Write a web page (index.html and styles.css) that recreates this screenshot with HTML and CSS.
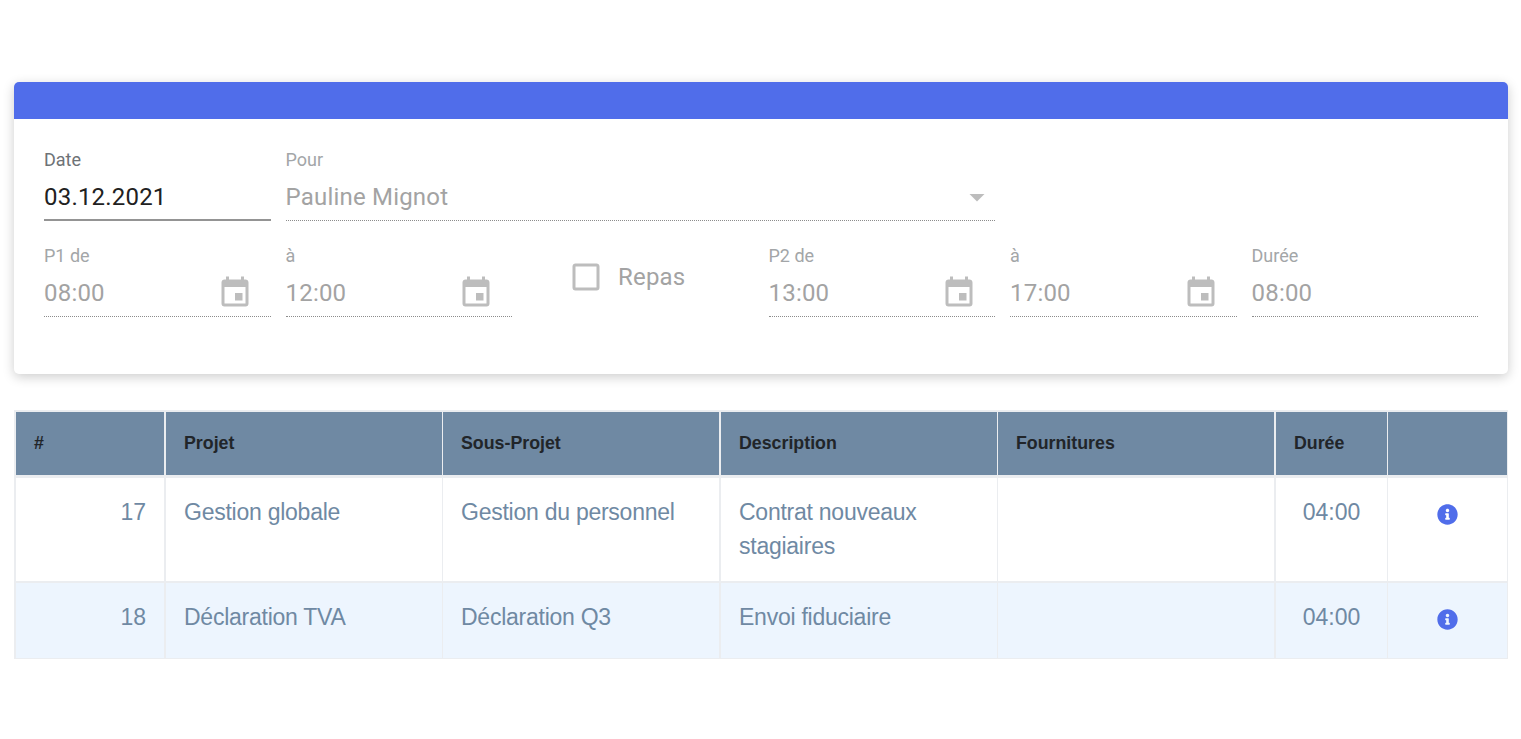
FILE: index.html
```html
<!DOCTYPE html>
<html lang="fr">
<head>
<meta charset="utf-8">
<title>Saisie</title>
<link rel="stylesheet" href="styles.css">
</head>
<body>
<main class="page">
  <section class="card">
    <div class="card-head"></div>
    <div class="form">
      <div class="field">
        <label class="field-label active">Date</label>
        <div class="field-control solid"><span class="value active">03.12.2021</span></div>
      </div>
      <div class="field span3">
        <label class="field-label">Pour</label>
        <div class="field-control"><span class="value">Pauline Mignot</span>
          <svg class="icon" viewBox="0 0 24 24"><path d="M7,10L12,15L17,10H7Z"/></svg>
        </div>
      </div>
      <div class="spacer"></div>
      <div class="spacer"></div>

      <div class="field">
        <label class="field-label">P1 de</label>
        <div class="field-control"><span class="value">08:00</span>
          <svg class="icon cal" viewBox="0 0 24 24"><path d="M19,19H5V8H19M16,1V3H8V1H6V3H5C3.89,3 3,3.89 3,5V19A2,2 0 0,0 5,21H19A2,2 0 0,0 21,19V5C21,3.89 20.1,3 19,3H18V1M17,12H12V17H17V12Z"/></svg>
        </div>
      </div>
      <div class="field">
        <label class="field-label">à</label>
        <div class="field-control"><span class="value">12:00</span>
          <svg class="icon cal" viewBox="0 0 24 24"><path d="M19,19H5V8H19M16,1V3H8V1H6V3H5C3.89,3 3,3.89 3,5V19A2,2 0 0,0 5,21H19A2,2 0 0,0 21,19V5C21,3.89 20.1,3 19,3H18V1M17,12H12V17H17V12Z"/></svg>
        </div>
      </div>
      <div class="check">
        <svg class="check-box" viewBox="0 0 24 24"><path d="M19,3H5C3.89,3 3,3.89 3,5V19A2,2 0 0,0 5,21H19A2,2 0 0,0 21,19V5C21,3.89 20.1,3 19,3M19,5V19H5V5H19Z"/></svg>
        <span class="check-label">Repas</span>
      </div>
      <div class="field">
        <label class="field-label">P2 de</label>
        <div class="field-control"><span class="value">13:00</span>
          <svg class="icon cal" viewBox="0 0 24 24"><path d="M19,19H5V8H19M16,1V3H8V1H6V3H5C3.89,3 3,3.89 3,5V19A2,2 0 0,0 5,21H19A2,2 0 0,0 21,19V5C21,3.89 20.1,3 19,3H18V1M17,12H12V17H17V12Z"/></svg>
        </div>
      </div>
      <div class="field">
        <label class="field-label">à</label>
        <div class="field-control"><span class="value">17:00</span>
          <svg class="icon cal" viewBox="0 0 24 24"><path d="M19,19H5V8H19M16,1V3H8V1H6V3H5C3.89,3 3,3.89 3,5V19A2,2 0 0,0 5,21H19A2,2 0 0,0 21,19V5C21,3.89 20.1,3 19,3H18V1M17,12H12V17H17V12Z"/></svg>
        </div>
      </div>
      <div class="field">
        <label class="field-label">Durée</label>
        <div class="field-control"><span class="value">08:00</span></div>
      </div>
    </div>
  </section>

  <table class="grid">
    <colgroup>
      <col class="c-num"><col class="c-proj"><col class="c-sub"><col class="c-desc"><col class="c-four"><col class="c-dur"><col class="c-act">
    </colgroup>
    <thead>
      <tr>
        <th class="thick">#</th><th>Projet</th><th class="thick">Sous-Projet</th><th>Description</th><th class="thick">Fournitures</th><th>Durée</th><th></th>
      </tr>
    </thead>
    <tbody>
      <tr class="row-a">
        <td class="thick num">17</td><td class="txt">Gestion globale</td><td class="thick txt">Gestion du personnel</td><td class="txt">Contrat nouveaux stagiaires</td><td class="thick"></td><td class="dur">04:00</td>
        <td class="act"><svg class="info" viewBox="0 0 512 512"><path d="M256 8C119.043 8 8 119.083 8 256c0 136.997 111.043 248 248 248s248-111.003 248-248C504 119.083 392.957 8 256 8zm0 110c23.196 0 42 18.804 42 42s-18.804 42-42 42-42-18.804-42-42 18.804-42 42-42zm56 254c0 6.627-5.373 12-12 12h-88c-6.627 0-12-5.373-12-12v-24c0-6.627 5.373-12 12-12h12v-64h-12c-6.627 0-12-5.373-12-12v-24c0-6.627 5.373-12 12-12h64c6.627 0 12 5.373 12 12v100h12c6.627 0 12 5.373 12 12v24z"/></svg></td>
      </tr>
      <tr class="row-b">
        <td class="thick num">18</td><td class="txt">Déclaration TVA</td><td class="thick txt">Déclaration Q3</td><td class="txt">Envoi fiduciaire</td><td class="thick"></td><td class="dur">04:00</td>
        <td class="act"><svg class="info" viewBox="0 0 512 512"><path d="M256 8C119.043 8 8 119.083 8 256c0 136.997 111.043 248 248 248s248-111.003 248-248C504 119.083 392.957 8 256 8zm0 110c23.196 0 42 18.804 42 42s-18.804 42-42 42-42-18.804-42-42 18.804-42 42-42zm56 254c0 6.627-5.373 12-12 12h-88c-6.627 0-12-5.373-12-12v-24c0-6.627 5.373-12 12-12h12v-64h-12c-6.627 0-12-5.373-12-12v-24c0-6.627 5.373-12 12-12h64c6.627 0 12 5.373 12 12v100h12c6.627 0 12 5.373 12 12v24z"/></svg></td>
      </tr>
    </tbody>
  </table>
</main>
</body>
</html>
```

FILE: styles.css
```css
* { box-sizing: border-box; }

html, body { margin: 0; padding: 0; background: #fff; }

.page {
  padding: 82px 13px 0 14px;
  font-family: "Liberation Sans", Arial, sans-serif;
}

.card {
  height: 292px;
  background: #fff;
  border-radius: 5px;
  box-shadow: 0 3px 12px rgba(0, 0, 0, .2);
  overflow: hidden;
}

.card-head { height: 37px; background: #506dea; }

.form {
  display: grid;
  grid-template-columns: repeat(6, 226.5px);
  column-gap: 15px;
  row-gap: 23px;
  padding: 29px 30px 0;
  font-family: Roboto, sans-serif;
}

.span3 { grid-column: span 3; }

.field { height: 73px; display: flex; flex-direction: column; }

.field-label {
  height: 24px;
  font-size: 18px;
  line-height: 24px;
  color: #a3a6a8;
}
.field-label.active { color: #6e7276; }

.field-control {
  flex: 1;
  display: flex;
  align-items: center;
  justify-content: space-between;
  padding-top: 2px;
  border-bottom: 1px dotted #8c8c8c;
}
.field-control.solid { border-bottom: 2px solid #949494; }

.value {
  font-size: 24px;
  line-height: 36px;
  letter-spacing: .2px;
  color: #a3a3a3;
}
.value.active { color: #212121; }

.icon { width: 36px; height: 36px; fill: #bdbdbd; display: block; }
.cal { margin-right: 18px; }

.check {
  display: flex;
  align-items: center;
  height: 73px;
  padding-left: 41px;
  padding-bottom: 7px;
}
.check-box { width: 36px; height: 36px; fill: #bdbdbd; display: block; }
.check-label { font-size: 24px; letter-spacing: .2px; color: #a3a3a3; margin-left: 14px; }

.grid {
  margin-top: 36px;
  width: 1494px;
  table-layout: fixed;
  border-collapse: separate;
  border-spacing: 0;
  border-top: 2px solid #ebedf0;
  border-left: 2px solid #ebedf0;
  font-size: 23px;
}

.c-num { width: 150px; }
.c-proj { width: 277px; }
.c-sub { width: 278px; }
.c-desc { width: 277px; }
.c-four { width: 278px; }
.c-dur { width: 112px; }
.c-act { width: 120px; }

.grid th, .grid td { border-right: 1px solid #ebedf0; }
.grid .thick { border-right-width: 2px; }

.grid th {
  height: 66px;
  padding: 0 18px;
  text-align: left;
  background: #6f89a3;
  color: #212529;
  font-size: 17.8px;
  font-weight: 700;
  border-bottom: 3px solid #ebedf0;
}

.grid td {
  padding: 17px 18px;
  vertical-align: top;
  color: #6f89a3;
  line-height: 34px;
}

.grid .txt { letter-spacing: -.25px; }

.row-a td { height: 105px; border-bottom: 2px solid #ebedf0; }
.row-b td { height: 76px; background: #edf5fe; border-bottom: 1px solid #ebedf0; }

.num { text-align: right; }
.dur { text-align: center; }
.act { text-align: center; }

.info { width: 21px; height: 21px; fill: #506dea; display: block; margin: 9px auto 0; }
```
